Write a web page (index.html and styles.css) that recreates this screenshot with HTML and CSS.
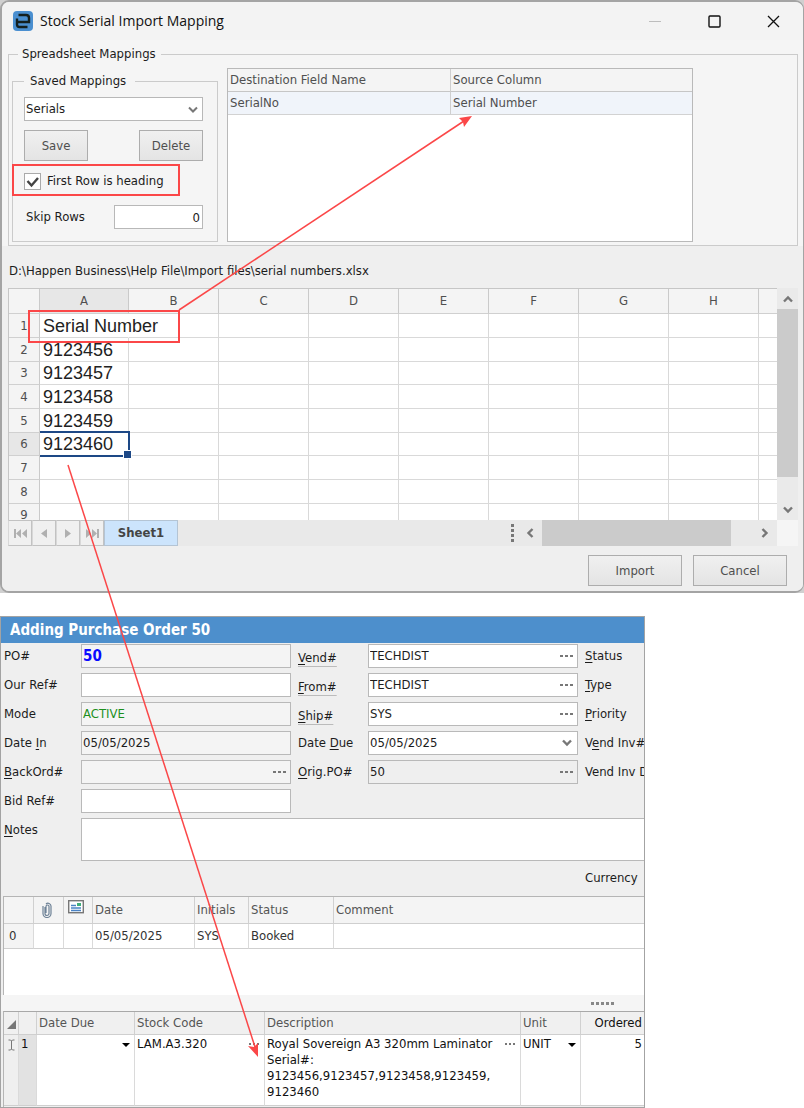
FILE: index.html
```
<!DOCTYPE html>
<html lang="en">
<head>
<meta charset="utf-8">
<title>Stock Serial Import Mapping</title>
<link rel="stylesheet" href="styles.css">
</head>
<body>
<main class="page">
<div class="backdrop">
<section class="dialog">
  <header class="titlebar">
    <svg class="app-icon" width="20" height="20" viewBox="0 0 20 20"><rect width="20" height="20" rx="4" fill="#4a8fd0"/><path d="M5.500 4h7.500q3 0 3 3v4H4M4 7.500v6q0 2.500 2.500 2.500H14.500" fill="none" stroke="#14201f" stroke-width="2.400"/></svg>
    <h1 class="titlebar-text">Stock Serial Import Mapping</h1>
    <button class="win-btn" aria-label="Minimize" disabled><svg width="13" height="13"><path d="M0 6.500h12" stroke="#bdbdbd"/></svg></button>
    <button class="win-btn" aria-label="Maximize"><svg width="13" height="13"><rect x="1" y="1" width="11" height="11" rx="1" fill="none" stroke="#111" stroke-width="1.400"/></svg></button>
    <button class="win-btn" aria-label="Close"><svg width="13" height="13"><path d="M1 1l11 11M12 1l-11 11" stroke="#111" stroke-width="1.300"/></svg></button>
  </header>
  <div class="dialog-body">
    <fieldset class="group">
      <legend>Spreadsheet Mappings</legend>
      <div class="mappings">
        <fieldset class="group saved">
          <legend>Saved Mappings</legend>
          <div class="select-wrap">
            <select class="select" aria-label="Saved mapping"><option>Serials</option></select>
            <svg class="chev" width="10" height="8"><path d="M1 1.500l4 4 4-4" fill="none" stroke="#777" stroke-width="2"/></svg>
          </div>
          <div class="btn-row"><button class="btn small">Save</button><button class="btn small">Delete</button></div>
          <label class="check"><input type="checkbox" checked><span class="box"><svg width="17" height="17"><path d="M3.500 8l4 4.500L14 5" fill="none" stroke="#444" stroke-width="2.400"/></svg></span>First Row is heading</label>
          <div class="skip"><label for="skip">Skip Rows</label><input id="skip" class="num" value="0"></div>
        </fieldset>
        <div class="map-box">
          <table class="map-table">
            <colgroup><col class="c-dest"><col></colgroup>
            <thead><tr><th>Destination Field Name</th><th>Source Column</th></tr></thead>
            <tbody><tr><td>SerialNo</td><td>Serial Number</td></tr></tbody>
          </table>
        </div>
      </div>
    </fieldset>
    <p class="path">D:\Happen Business\Help File\Import files\serial numbers.xlsx</p>
    <div class="sheet">
      <div class="sheet-main">
        <div class="sheet-view">
          <table class="cells">
            <colgroup><col class="c-row"><col class="c-a"><col class="c-x"><col class="c-x"><col class="c-x"><col class="c-x"><col class="c-x"><col class="c-x"><col class="c-x"><col></colgroup>
            <thead><tr><th></th><th class="cur">A</th><th>B</th><th>C</th><th>D</th><th>E</th><th>F</th><th>G</th><th>H</th><th></th></tr></thead>
            <tbody>
              <tr><th>1</th><td class="spill">Serial Number</td><td></td><td></td><td></td><td></td><td></td><td></td><td></td><td></td></tr>
              <tr><th>2</th><td>9123456</td><td></td><td></td><td></td><td></td><td></td><td></td><td></td><td></td></tr>
              <tr><th>3</th><td>9123457</td><td></td><td></td><td></td><td></td><td></td><td></td><td></td><td></td></tr>
              <tr><th>4</th><td>9123458</td><td></td><td></td><td></td><td></td><td></td><td></td><td></td><td></td></tr>
              <tr><th>5</th><td>9123459</td><td></td><td></td><td></td><td></td><td></td><td></td><td></td><td></td></tr>
              <tr><th class="cur">6</th><td class="active">9123460</td><td></td><td></td><td></td><td></td><td></td><td></td><td></td><td></td></tr>
              <tr><th>7</th><td></td><td></td><td></td><td></td><td></td><td></td><td></td><td></td><td></td></tr>
              <tr><th>8</th><td></td><td></td><td></td><td></td><td></td><td></td><td></td><td></td><td></td></tr>
              <tr><th>9</th><td></td><td></td><td></td><td></td><td></td><td></td><td></td><td></td><td></td></tr>
            </tbody>
          </table>
        </div>
        <div class="vscroll">
          <button class="sb" aria-label="Scroll up"><svg width="10" height="8"><path d="M1 6.500l4-4 4 4" fill="none" stroke="#777" stroke-width="2.400"/></svg></button>
          <div class="vthumb"></div>
          <button class="sb down" aria-label="Scroll down"><svg width="10" height="8"><path d="M1 1.500l4 4 4-4" fill="none" stroke="#777" stroke-width="2.400"/></svg></button>
        </div>
      </div>
      <div class="sheet-foot">
        <button class="nav" aria-label="First sheet"><svg width="13" height="9" fill="#b0b0b0"><path d="M0 0h2v9h-2zM7 0v9L2 4.500zM13 0v9L8 4.500z"/></svg></button>
        <button class="nav" aria-label="Previous sheet"><svg width="6" height="9" fill="#b0b0b0"><path d="M6 0v9L0 4.500z"/></svg></button>
        <button class="nav" aria-label="Next sheet"><svg width="6" height="9" fill="#b0b0b0"><path d="M0 0v9L6 4.500z"/></svg></button>
        <button class="nav" aria-label="Last sheet"><svg width="13" height="9" fill="#b0b0b0"><path d="M11 0h2v9h-2zM6 0v9L11 4.500zM0 0v9L5 4.500z"/></svg></button>
        <button class="tab">Sheet1</button>
        <div class="hscroll">
          <svg class="grip" width="3" height="19" fill="#777"><path d="M0 0h3v3H0zM0 5h3v3H0zM0 10h3v3H0zM0 15h3v3H0z"/></svg>
          <button class="sb side" aria-label="Scroll left"><svg width="8" height="10"><path d="M6.500 1l-4 4 4 4" fill="none" stroke="#777" stroke-width="2.400"/></svg></button>
          <div class="hthumb"></div>
          <button class="sb side" aria-label="Scroll right"><svg width="8" height="10"><path d="M1.500 1l4 4-4 4" fill="none" stroke="#777" stroke-width="2.400"/></svg></button>
        </div>
        <div class="corner"></div>
      </div>
    </div>
    <div class="actions"><button class="btn wide">Import</button><button class="btn wide">Cancel</button></div>
  </div>
</section>
</div>

<section class="order">
  <h2 class="order-title">Adding Purchase Order 50</h2>
  <form class="form">
    <label for="po">PO#</label><div class="field ro"><input id="po" class="po" value="50" readonly></div>
    <label class="second link" for="vend"><u>V</u>end#</label><div class="field"><input id="vend" value="TECHDIST"><button type="button" class="dots" aria-label="Browse vendors"><svg width="14" height="2" fill="#777"><path d="M0 0h3v2H0zM5 0h3v2H5zM10 0h3v2h-3z"/></svg></button></div>
    <span class="side-label"><u>S</u>tatus</span>

    <label for="ref">Our Ref#</label><div class="field"><input id="ref"></div>
    <label class="second link" for="from"><u>F</u>rom#</label><div class="field"><input id="from" value="TECHDIST"><button type="button" class="dots" aria-label="Browse sources"><svg width="14" height="2" fill="#777"><path d="M0 0h3v2H0zM5 0h3v2H5zM10 0h3v2h-3z"/></svg></button></div>
    <span class="side-label"><u>T</u>ype</span>

    <label for="mode">Mode</label><div class="field ro"><input id="mode" class="mode" value="ACTIVE" readonly></div>
    <label class="second link" for="ship"><u>S</u>hip#</label><div class="field"><input id="ship" value="SYS"><button type="button" class="dots" aria-label="Browse shipping"><svg width="14" height="2" fill="#777"><path d="M0 0h3v2H0zM5 0h3v2H5zM10 0h3v2h-3z"/></svg></button></div>
    <span class="side-label"><u>P</u>riority</span>

    <label for="din">Date <u>I</u>n</label><div class="field ro"><input id="din" value="05/05/2025" readonly></div>
    <label class="second" for="due">Date <u>D</u>ue</label><div class="field"><input id="due" value="05/05/2025"><button type="button" class="dots" aria-label="Pick date"><svg width="12" height="8"><path d="M2 1.500l4 4 4-4" fill="none" stroke="#777" stroke-width="2.400"/></svg></button></div>
    <span class="side-label">V<u>e</u>nd Inv#</span>

    <label for="back"><u>B</u>ackOrd#</label><div class="field ro"><input id="back" readonly><button type="button" class="dots" aria-label="Browse back orders"><svg width="14" height="2" fill="#777"><path d="M0 0h3v2H0zM5 0h3v2H5zM10 0h3v2h-3z"/></svg></button></div>
    <label class="second" for="orig"><u>O</u>rig.PO#</label><div class="field dim"><input id="orig" value="50" readonly><button type="button" class="dots" aria-label="Browse original order"><svg width="14" height="2" fill="#777"><path d="M0 0h3v2H0zM5 0h3v2H5zM10 0h3v2h-3z"/></svg></button></div>
    <span class="side-label">Vend Inv D</span>

    <label for="bid">Bid Ref#</label><div class="field"><input id="bid"></div>
    <label class="notes-label" for="notes"><u>N</u>otes</label><textarea id="notes" class="notes"></textarea>
    <span class="side-label currency">Currency</span>
  </form>

  <div class="history">
    <table class="grid">
      <colgroup><col class="h-n"><col class="h-n"><col class="h-i"><col class="h-date"><col class="h-init"><col class="h-stat"><col></colgroup>
      <thead><tr><th></th>
        <th class="ico"><svg width="10" height="16" viewBox="0 0 10 16"><path d="M3 5v6.500a2 2 0 0 0 4 0V4.500a1.500 1.500 0 0 0-3 0V11M1 4v7.500a4 4 0 0 0 8 0V4a3 3 0 0 0-5-2" fill="none" stroke="#6d8196" stroke-width="1.200"/></svg></th>
        <th class="ico mail"><svg width="16" height="14" viewBox="0 0 16 14"><rect x=".7" y=".7" width="14.600" height="12" fill="#fff" stroke="#777" stroke-width="1.400"/><path d="M9 3h4v3H9z" fill="#3fae7b"/><path d="M3 5.500h5M3 8h10M3 10.500h10" stroke="#4a82c4" stroke-width="1.300"/></svg></th>
        <th>Date</th><th>Initials</th><th>Status</th><th>Comment</th></tr></thead>
      <tbody><tr><td class="rowno">0</td><td></td><td></td><td>05/05/2025</td><td>SYS</td><td>Booked</td><td></td></tr></tbody>
    </table>
  </div>
  <div class="splitter"><svg width="24" height="3" fill="#888"><path d="M0 0h3v3H0zM5 0h3v3H5zM10 0h3v3h-3zM15 0h3v3h-3zM20 0h3v3h-3z"/></svg></div>
  <div class="lines">
    <table class="grid items">
      <colgroup><col class="l-mark"><col class="l-no"><col class="l-due"><col class="l-code"><col class="l-desc"><col class="l-unit"><col></colgroup>
      <thead><tr><th class="mark"><svg width="9" height="9"><path d="M9 0v9H0z" fill="#777"/></svg></th><th></th><th>Date Due</th><th>Stock Code</th><th>Description</th><th>Unit</th><th class="right">Ordered</th></tr></thead>
      <tbody><tr>
        <td class="mark"><svg width="7" height="12"><path d="M.5 1h2l1 1 1-1h2M3.500 2v8M.5 11h2l1-1 1 1h2" fill="none" stroke="#777"/></svg></td>
        <td class="lineno">1</td>
        <td><div class="cell end"><svg width="8" height="5"><path d="M0 0h8L4 4z"/></svg></div></td>
        <td><div class="cell">LAM.A3.320<svg width="11" height="2" fill="#777"><path d="M0 0h2v2H0zM4 0h2v2H4zM8 0h2v2H8z"/></svg></div></td>
        <td><div class="cell"><span>Royal Sovereign A3 320mm Laminator<br>Serial#:<br>9123456,9123457,9123458,9123459,<br>9123460</span><svg width="11" height="2" fill="#777"><path d="M0 0h2v2H0zM4 0h2v2H4zM8 0h2v2H8z"/></svg></div></td>
        <td><div class="cell">UNIT<svg width="8" height="5"><path d="M0 0h8L4 4z"/></svg></div></td>
        <td class="right">5</td>
      </tr></tbody>
    </table>
  </div>
</section>

<svg class="callouts" width="804" height="1108" viewBox="0 0 804 1108" aria-hidden="true">
  <g fill="none" stroke="#fb4748" stroke-width="2">
    <rect x="13" y="165" width="166" height="30"/>
    <rect x="29" y="311" width="150" height="31"/>
    <path d="M179 310L464 121" stroke-width="1.500"/>
    <path d="M68 465L255 1047" stroke-width="1.500"/>
  </g>
  <path d="M472 116l-13 2 4 4 1 5zM258 1057l-10-11 6 1 4-4z" fill="#fb4748"/>
</svg>
</main>
</body>
</html>
```
FILE: styles.css
```
* { box-sizing: border-box; }
body { margin: 0; background: #fff; color: #1c1c1c; font: 13px/18px "DejaVu Sans Condensed", "Noto Sans", Tahoma, sans-serif; }
button, input, select, textarea { font: inherit; color: inherit; margin: 0; border-radius: 0; }
button { padding: 0; border: 0; background: none; }
svg { display: block; flex: none; }
.page { position: relative; }

.backdrop { background: #d0d0d0; }
.dialog { border: 2px solid #a4a4a4; border-right-width: 1px; border-radius: 9px; background: #efefef; overflow: hidden; }
.titlebar { display: flex; align-items: center; height: 38px; padding-left: 11px; background: #f3f3f3; }
.titlebar-text { flex: 1; margin: 0 0 0 7px; font: 14px/20px "Open Sans", sans-serif; color: #111; }
.win-btn { display: flex; justify-content: center; width: 59px; }
.dialog-body { padding: 5px 5px 5px 6px; background: linear-gradient(#f5f5f5 206px, #efefef 206px); }

.group { min-width: 0; margin: 0; padding: 5px 3px 3px; border: 1px solid #cbcbcb; }
.group legend { margin-left: 6px; padding: 0 5px 0 4px; }
.mappings { display: flex; gap: 9px; height: 174px; }
.saved { width: 206px; margin-top: 4px; padding: 7px 14px 0 11px; }
.saved legend { margin-left: 0; padding: 0 9px 0 6px; }
.select-wrap { position: relative; }
.select { display: block; width: 100%; height: 24px; padding: 0 1px; border: 1px solid #b8b8b8; background: #fff; appearance: none; }
.chev { position: absolute; right: 5px; top: 9px; pointer-events: none; }
.btn-row { display: flex; justify-content: space-between; margin-top: 9px; }
.btn { height: 31px; border: 1px solid #adadad; background: linear-gradient(#f0f0f0, #e4e4e4); color: #4f4f4f; }
.small { width: 64px; }
.wide { width: 94px; }
.check { display: flex; align-items: center; height: 20px; margin-top: 10px; white-space: nowrap; }
.check input { position: absolute; opacity: 0; }
.box { display: block; width: 17px; height: 17px; margin-right: 6px; border: 1px solid #aaa; background: #fff; }
.box svg { margin: -1px; }
.skip { display: flex; align-items: center; justify-content: space-between; margin-top: 14px; padding-left: 2px; }
.num { width: 89px; height: 24px; padding: 0 2px; border: 1px solid #b8b8b8; background: #fff; text-align: right; }

.map-box { flex: 0 1 466px; border: 1px solid #b9b9b9; background: #fff; }
table { border-collapse: separate; border-spacing: 0; table-layout: fixed; width: 100%; }
th, td { font-weight: 400; text-align: left; padding: 0 2px; white-space: nowrap; }
.map-table { color: #4f4f4f; }
.c-dest { width: 223px; }
.map-table th { height: 23px; border-bottom: 1px solid #c6c6c6; background: #f4f4f4; }
.map-table td { height: 23px; border-bottom: 1px solid #d2d2d2; background: #f0f4fa; }
.map-table th:first-child, .map-table td:first-child { border-right: 1px solid #cfcfcf; }

.path { margin: 16px 0 8px 1px; white-space: nowrap; }
.sheet-main { display: flex; height: 232px; }
.sheet-view { flex: 1; overflow: hidden; border-left: 1px solid #c6c6c6; border-top: 1px solid #c6c6c6; background: #fff; }
.cells { color: #4f4f4f; }
.c-row { width: 31px; }
.c-a { width: 89px; }
.c-x { width: 90px; }
.cells tr { height: 24px; }
.cells thead tr { height: 25px; }
.cells tbody tr:nth-child(3n) { height: 23px; }
.cells th { text-align: center; background: #f4f4f4; border-right: 1px solid #cacaca; border-bottom: 1px solid #d0d0d0; }
.cells td { padding: 0 3px; border-right: 1px solid #d9d9d9; border-bottom: 1px solid #d9d9d9; color: #222; font: 18px/20px "Liberation Sans", Arial, sans-serif; }
.cells th:last-child, .cells td:last-child { border-right: 0; }
.cells .cur { background: #e7e7e7; }
.cells .spill { border-right-color: transparent; }
.cells .active { position: relative; }
.active::before { content: ""; position: absolute; inset: -2px -2px -2px 0; border: 2px solid #1d4886; border-left: 0; }
.active::after { content: ""; position: absolute; right: -4px; bottom: -4px; width: 7px; height: 7px; border: 1px solid #fff; background: #1d4886; box-sizing: content-box; }
.vscroll { display: flex; flex-direction: column; width: 21px; background: #eaeaea; }
.sb { display: flex; align-items: center; justify-content: center; height: 21px; }
.vthumb { height: 168px; background: #cbcbcb; }
.down { margin-top: auto; }
.sheet-foot { display: flex; height: 26px; background: #e9e9e9; }
.nav { display: flex; align-items: center; justify-content: center; width: 24px; border: 1px solid #c2c2c2; border-left-color: #d8d8d8; background: #f0f0f0; }
.tab { width: 74px; border: 1px solid #b4c4d4; background: #cce4fc; color: #444; font-weight: 700; font-size: 13px; }
.hscroll { flex: 1; display: flex; align-items: center; justify-content: flex-end; }
.side { width: 24px; }
.hthumb { width: 189px; height: 26px; background: #cbcbcb; }
.side:last-child { margin-left: 22px; }
.grip { margin-right: 4px; }
.corner { width: 21px; background: #f5f5f5; }
.actions { display: flex; justify-content: flex-end; gap: 11px; margin: 9px 11px 0 0; }

.order { max-width: 645px; margin-top: 23px; border: 1px solid #a3a3a3; background: #efefef; overflow: hidden; }
.order-title { margin: 0; padding: 0 9px; background: #4d8fcc; color: #fff; font-weight: 700; font-size: 15px; line-height: 26px; }
.form { display: grid; grid-template-columns: 77px 210px 77px 210px 1fr; row-gap: 5px; padding: 1px 0 6px 3px; grid-auto-rows: minmax(24px, auto); align-items: center; }
.second { padding-left: 7px; }
.link { padding-top: 4px; text-decoration: underline; text-decoration-color: #bbb; text-underline-offset: 4px; }
.form u { text-underline-offset: 2px; }
.side-label { padding-left: 7px; white-space: nowrap; overflow: hidden; min-width: 0; }
.field { display: flex; height: 24px; border: 1px solid #b9b9b9; background: #fff; }
.field input { flex: 1; min-width: 0; padding: 0 1px; border: 0; background: transparent; }
.ro { background: #f4f4f4; }
.dim { background: #efefef; }
.field .po { font-weight: 700; font-size: 15px; color: #0a0aff; }
.field .mode { color: #1d8f1d; }
.dots { display: flex; align-items: center; justify-content: center; width: 20px; }
.notes-label { grid-column: 1; padding-bottom: 20px; }
.notes { grid-column: 2 / -1; width: auto; height: 43px; border: 1px solid #b9b9b9; border-right: 0; background: #fff; resize: none; }
.currency { grid-column: 5; }

.history { height: 99px; margin-left: 2px; border-top: 1px solid #b5b5b5; border-left: 1px solid #b5b5b5; background: #fff; }
.grid { color: #333; }
.grid th { height: 27px; background: #f4f4f4; color: #555; border-right: 1px solid #d0d0d0; border-bottom: 1px solid #cfcfcf; }
.grid td { height: 25px; border-right: 1px solid #dadada; border-bottom: 1px solid #cfcfcf; }
.grid th:last-child, .grid td:last-child { border-right: 0; }
.h-n { width: 30px; }
.h-i { width: 29px; }
.h-date { width: 102px; }
.h-init { width: 54px; }
.h-stat { width: 85px; }
.grid .ico { padding-left: 8px; }
.grid .mail { padding: 0 0 6px 4px; }
.grid .rowno { padding-left: 5px; background: #f4f4f4; }
.splitter { display: flex; justify-content: flex-end; align-items: center; height: 16px; padding-right: 29px; background: #f5f5f5; }
.lines { margin-left: 2px; padding-bottom: 1px; border-top: 1px solid #a8a8a8; border-left: 1px solid #b5b5b5; }
.items th { height: 23px; background: #f0f0f0; }
.grid.items td { height: 71px; padding-top: 1px; vertical-align: top; background: #fff; color: #111; line-height: 16px; }
.l-mark { width: 15px; }
.l-no { width: 18px; }
.l-due { width: 98px; }
.l-code { width: 130px; }
.l-desc { width: 256px; }
.l-unit { width: 60px; }
.cell { display: flex; justify-content: space-between; }
.cell svg { margin: 7px 2px 0 0; }
.end { justify-content: flex-end; }
.items .mark svg { margin: 3px auto 0; }
.grid.items td.mark { background: #efefef; }
.grid.items td.lineno { background: #e2e2e2; }
.grid .right { text-align: right; color: #111; }

.callouts { position: absolute; left: 0; top: 0; pointer-events: none; }
```
